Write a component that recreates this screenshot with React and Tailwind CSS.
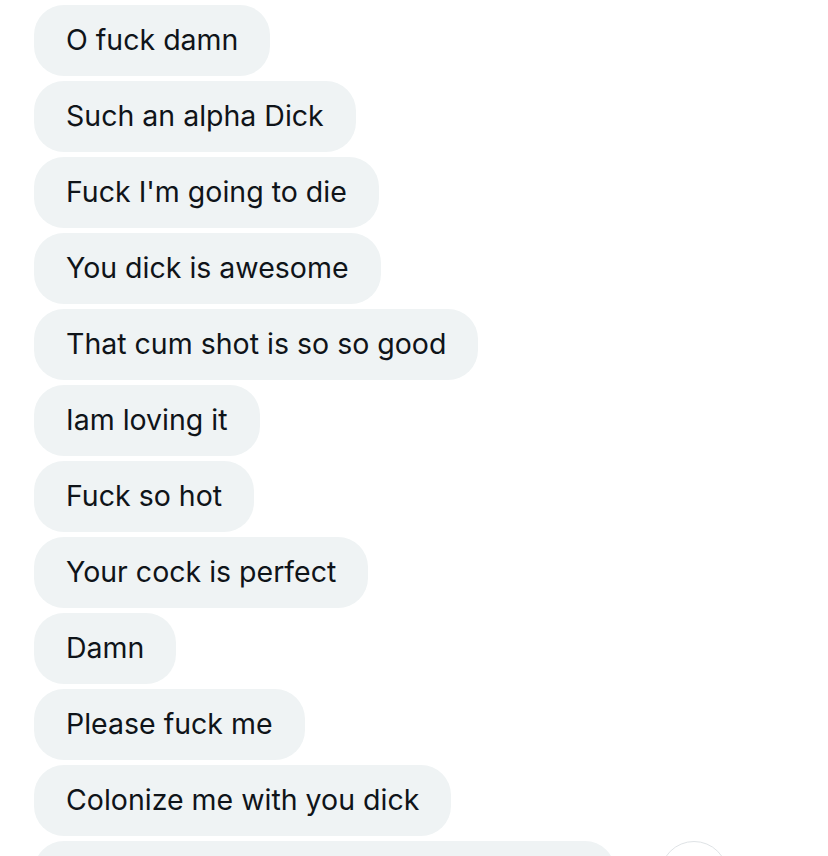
import React from 'react';

const messages = [
  'O fuck damn',
  'Such an alpha Dick',
  "Fuck I'm going to die",
  'You dick is awesome',
  'That cum shot is so so good',
  'Iam loving it',
  'Fuck so hot',
  'Your cock is perfect',
  'Damn',
  'Please fuck me',
  'Colonize me with you dick',
];

export default function App() {
  return (
    <div className="h-[856px] w-[828px] overflow-hidden bg-white font-['Inter',sans-serif]">
      <div className="flex flex-col items-start gap-[5px] pl-[34px] pt-[5px]">
        {messages.map((m, i) => (
          <div
            key={i}
            className="flex h-[71px] items-center rounded-[30px] bg-[#eff3f4] px-8 text-[28.5px] text-[#0f1419]"
          >
            {m}
          </div>
        ))}
        {/* partially visible last row */}
        <div className="flex items-start gap-[45px]">
          <div className="h-[71px] w-[581px] rounded-[30px] bg-[#eff3f4]" />
          <div className="h-[68px] w-[68px] rounded-full border border-[#dfe3e6] bg-white" />
        </div>
      </div>
    </div>
  );
}
